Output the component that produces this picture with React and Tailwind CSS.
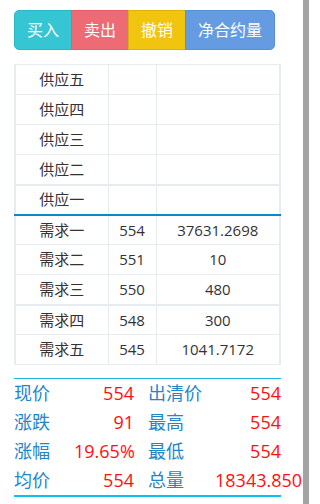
import React from "react";

const supply = ["供应五", "供应四", "供应三", "供应二", "供应一"];

const demand = [
  { name: "需求一", price: "554", vol: "37631.2698" },
  { name: "需求二", price: "551", vol: "10" },
  { name: "需求三", price: "550", vol: "480" },
  { name: "需求四", price: "548", vol: "300" },
  { name: "需求五", price: "545", vol: "1041.7172" },
];

const stats = [
  ["现价", "554", "出清价", "554"],
  ["涨跌", "91", "最高", "554"],
  ["涨幅", "19.65%", "最低", "554"],
  ["均价", "554", "总量", "18343.850"],
];

const Buttons = () => (
  <div className="flex text-base leading-[22px] text-white">
    <button className="px-3 py-2 border border-[#2bb8c4] bg-[#36c6d3] rounded-l-[5px]">
      买入
    </button>
    <button className="px-3 py-2 border border-[#e85d69] bg-[#ed6b75] -ml-px">
      卖出
    </button>
    <button className="px-3 py-2 border border-[#dab10d] bg-[#f1c40f] -ml-px">
      撤销
    </button>
    <button className="px-3 py-2 border border-[#5890dd] bg-[#659be0] rounded-r-[5px] -ml-px">
      净合约量
    </button>
  </div>
);

const cell = "border border-[#e7ecf1] h-[30px] p-0 text-center";

const OrderBook = () => (
  <table className="w-[267px] border-collapse table-fixed text-[15px] text-[#333] border-x-2 border-[#e7ecf1]">
    <colgroup>
      <col className="w-[93px]" />
      <col className="w-[48px]" />
      <col />
    </colgroup>
    <tbody>
      {supply.map((name, i) => {
        const extra =
          i === 4 ? "border-b-2 border-b-[#0a88c8]" : i === 3 ? "border-b-2" : "";
        return (
          <tr key={name}>
            <td className={`${cell} ${extra}`}>{name}</td>
            <td className={`${cell} ${extra}`}></td>
            <td className={`${cell} ${extra}`}></td>
          </tr>
        );
      })}
      {demand.map((row, i) => {
        const extra = i === 2 ? "border-b-2" : "";
        return (
          <tr key={row.name}>
            <td className={`${cell} ${extra}`}>{row.name}</td>
            <td className={`${cell} ${extra}`}>{row.price}</td>
            <td className={`${cell} ${extra}`}>{row.vol}</td>
          </tr>
        );
      })}
    </tbody>
  </table>
);

const Stats = () => (
  <div className="w-[267px] border-t border-b-2 border-t-[#1fb3e6] border-b-[#0cc0f0] text-[18px] leading-[29px]">
    {stats.map(([l1, v1, l2, v2]) => (
      <div key={l1} className="grid grid-cols-[60px_60px_14px_67px_66px]">
        <span className="text-[#1f86c8]">{l1}</span>
        <span className="text-right text-[#ff1010]">{v1}</span>
        <span />
        <span className="text-[#1f86c8]">{l2}</span>
        <span className="text-right text-[#ff1010] whitespace-nowrap">{v2}</span>
      </div>
    ))}
  </div>
);

export default function App() {
  return (
    <div
      className="flex w-[309px] h-[504px] overflow-hidden bg-white"
      style={{ fontFamily: '"Open Sans", "Noto Sans CJK SC", sans-serif' }}
    >
      <div className="flex-1 flex flex-col pl-[14px] pt-[10px]">
        <Buttons />
        <div className="mt-[14px]">
          <OrderBook />
        </div>
        <div className="mt-[13px]">
          <Stats />
        </div>
      </div>
      <div className="w-[6px] h-full bg-[#a3a3a3]" />
    </div>
  );
}
